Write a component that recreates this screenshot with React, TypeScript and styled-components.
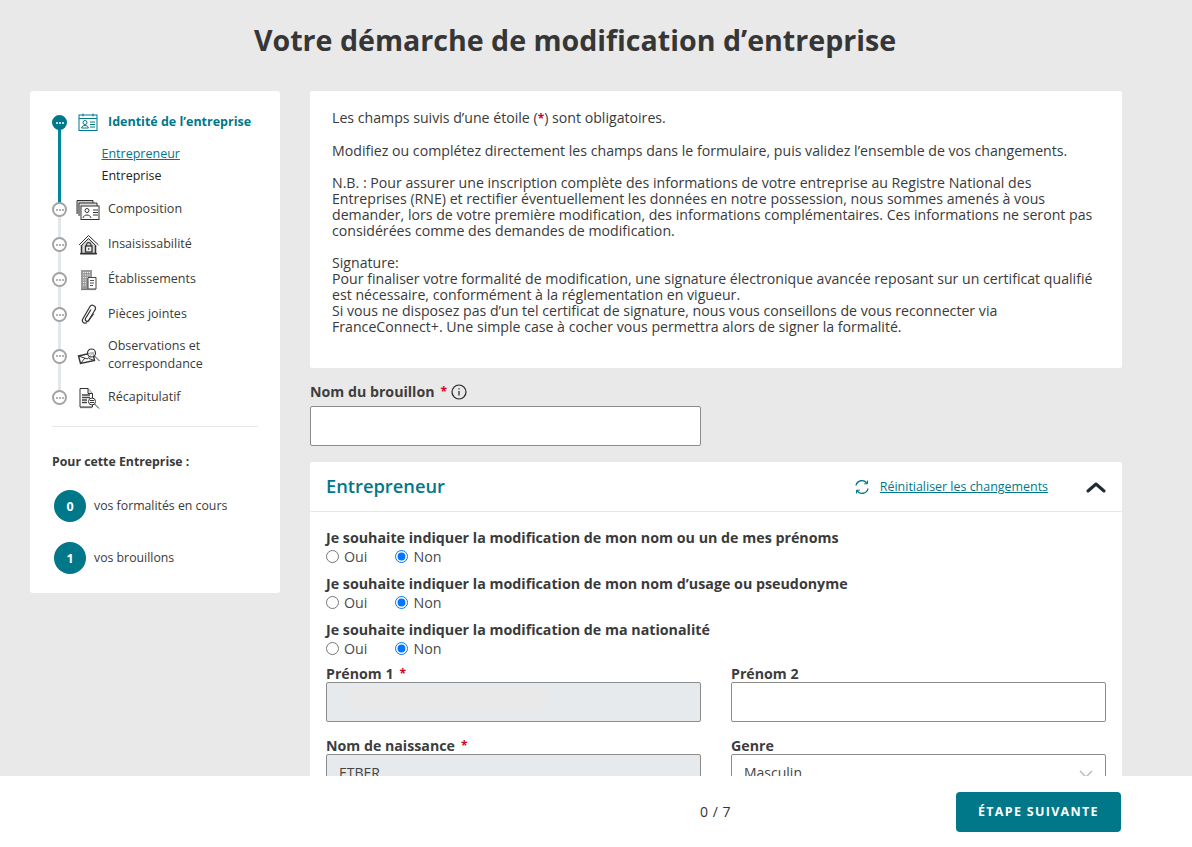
import React from "react";
import styled, { createGlobalStyle } from "styled-components";

const TEAL = "#00788a";

const Global = createGlobalStyle`
  html, body { margin: 0; padding: 0; height: 847px; overflow: hidden; background: #e9e9e9; }
  body { font-family: "Open Sans", "Liberation Sans", sans-serif; color: #333; }
  * { box-sizing: border-box; }
`;

const Page = styled.div`
  width: 1192px;
  height: 847px;
  overflow: hidden;
  position: relative;
`;
const Title = styled.h1`
  margin: 0;
  width: 1150px;
  height: 91px;
  padding-top: 20px;
  text-align: center;
  font-size: 28.6px;
  line-height: 40px;
  font-weight: 700;
  color: #363636;
`;
const Columns = styled.div`
  display: flex;
  align-items: flex-start;
  gap: 30px;
  padding-left: 30px;
`;
const Sidebar = styled.aside`
  width: 250px;
  height: 502px;
  background: #fff;
  border-radius: 3px;
  padding: 14px 22px 0;
`;
const Stepper = styled.div`
  position: relative;
  padding-bottom: 11px;
  border-bottom: 1px solid #e6e8ea;
`;
const Rail = styled.div<{ $top: number; $height: number; $active?: boolean }>`
  position: absolute;
  left: 6px;
  top: ${(p) => p.$top}px;
  height: ${(p) => p.$height}px;
  width: 3px;
  background: ${(p) => (p.$active ? "#00869b" : "#e4e7ea")};
`;
const Step = styled.div<{ $tall?: boolean }>`
  position: relative;
  display: flex;
  align-items: center;
  min-height: ${(p) => (p.$tall ? 48 : 35)}px;
`;
const Bullet = styled.span<{ $active?: boolean }>`
  flex: none;
  width: 15px;
  height: 15px;
  border-radius: 50%;
  display: flex;
  align-items: center;
  justify-content: center;
  gap: 1px;
  background: ${(p) => (p.$active ? "#00788a" : "#fff")};
  border: 2px solid ${(p) => (p.$active ? "#00788a" : "#a3a3a3")};
  i {
    width: 2px;
    height: 2px;
    border-radius: 50%;
    background: ${(p) => (p.$active ? "#fff" : "#9a9a9a")};
  }
`;
const StepIcon = styled.svg`
  flex: none;
  width: 24px;
  height: 24px;
  margin-left: 9px;
  margin-right: 8px;
`;
const StepLabel = styled.span<{ $active?: boolean }>`
  font-size: 12.5px;
  line-height: 18px;
  padding-bottom: 2px;
  font-weight: ${(p) => (p.$active ? 700 : 400)};
  color: ${(p) => (p.$active ? TEAL : "#3a3a3a")};
`;
const SubList = styled.div`
  padding: 3px 0 5px 49.5px;
`;
const SubItem = styled.div<{ $current?: boolean }>`
  height: 22px;
  font-size: 12.5px;
  line-height: 22px;
  color: ${(p) => (p.$current ? TEAL : "#222")};
  text-decoration: ${(p) => (p.$current ? "underline" : "none")};
`;
const ForTitle = styled.div`
  margin-top: 26px;
  font-size: 12.3px;
  line-height: 18px;
  font-weight: 700;
  color: #3a3a3a;
`;
const Counter = styled.div`
  display: flex;
  align-items: center;
  gap: 8px;
  margin: 19px 0 0 2px;
  font-size: 12.3px;
  color: #3a3a3a;
  & + & { margin-top: 20px; }
`;
const CounterText = styled.span`
  padding-bottom: 2px;
`;
const CounterDot = styled.span`
  width: 32px;
  height: 32px;
  border-radius: 50%;
  background: ${TEAL};
  color: #fff;
  display: flex;
  align-items: center;
  justify-content: center;
  font-size: 12.5px;
  font-weight: 700;
`;
const Main = styled.main`
  width: 812px;
`;
const Notice = styled.section`
  height: 277px;
  background: #fff;
  border-radius: 2px;
  padding: 19px 22px 0;
  font-size: 14.15px;
  line-height: 16px;
  color: #3a3a3a;
  p { margin: 0 0 16px; }
  b { color: #d0021b; font-weight: 700; font-size: 12px; }
`;
const FieldLabel = styled.label`
  display: flex;
  align-items: center;
  gap: 4px;
  height: 14px;
  font-size: 14.2px;
  line-height: 14px;
  font-weight: 700;
  color: #3d3d3d;
`;
const Star = styled.span`
  color: #d0021b;
  font-size: 12px;
  font-weight: 700;
  margin-left: 2px;
`;
const InfoIcon = styled.svg`
  margin-left: 0;
`;
const DraftField = styled.div`
  margin-top: 17px;
  width: 391px;
`;
const TextBox = styled.div<{ $disabled?: boolean }>`
  position: relative;
  margin-top: 1px;
  height: 40px;
  padding-left: 12px;
  border: 1px solid #8c8c8c;
  border-radius: 2px;
  background: ${(p) => (p.$disabled ? "#e7eaed" : "#fff")};
  font-size: 14px;
  line-height: 36px;
  color: #444;
`;
const DraftBox = styled(TextBox)`
  margin-top: 7px;
`;
const Masked = styled.span`
  display: block;
  margin: 6px 0 0 8px;
  width: 200px;
  height: 20px;
  background: #e9e9e9;
`;
const SelectChevron = styled.svg`
  position: absolute;
  right: 12px;
  top: 15px;
  width: 14px;
  height: 9px;
`;
const Card = styled.section`
  margin-top: 16px;
  background: #fff;
  border-radius: 2px;
`;
const CardHeader = styled.header`
  height: 50px;
  padding: 0 16px;
  display: flex;
  align-items: center;
  border-bottom: 1px solid #e6e6e6;
`;
const CardTitle = styled.h2`
  margin: 0 0 2px;
  font-size: 18.3px;
  font-weight: 600;
  color: ${TEAL};
  flex: 1;
`;
const ResetLink = styled.a`
  margin-left: 10px;
  font-size: 12.45px;
  color: ${TEAL};
  text-decoration: underline;
`;
const Collapse = styled.svg`
  margin-left: 38px;
  width: 20px;
  height: 12px;
`;
const CardBody = styled.div`
  padding: 17px 16px 0;
`;
const Question = styled.div`
  height: 46px;
`;
const QuestionText = styled.div`
  font-size: 14.25px;
  line-height: 18px;
  font-weight: 700;
  color: #3a3a3a;
`;
const RadioRow = styled.div`
  display: flex;
  gap: 28px;
  height: 18px;
  align-items: center;
`;
const RadioLabel = styled.label`
  display: flex;
  align-items: center;
  gap: 5px;
  font-size: 14.25px;
  color: #4a4a4a;
  input { margin: 0; width: 13px; height: 13px; }
`;
const Grid = styled.div`
  display: grid;
  grid-template-columns: 375px 375px;
  column-gap: 30px;
  row-gap: 17px;
`;
const GridField = styled.div``;
const Footer = styled.footer`
  position: absolute;
  left: 0;
  right: 0;
  bottom: 0;
  height: 71px;
  background: #fff;
  display: flex;
  align-items: center;
  padding-left: 700px;
`;
const Pager = styled.span`
  font-size: 14px;
  letter-spacing: 0.5px;
  color: #333;
`;
const NextButton = styled.button`
  margin-left: 225px;
  width: 165px;
  height: 40px;
  border: none;
  border-radius: 4px;
  background: ${TEAL};
  color: #fff;
  font-family: inherit;
  font-size: 12.5px;
  font-weight: 700;
  letter-spacing: 1.3px;
`;

const dark = { fill: "none", stroke: "#333", strokeWidth: 1 };

const IconCard = () => (
  <StepIcon viewBox="0 0 24 24" fill="none" stroke={TEAL} strokeWidth="1">
    <rect x="3" y="4" width="18" height="15.500" />
    <path d="M3 7.500h18M7 2.500v3M17 2.500v3M14 11h5M14 13.500h5M14 16h5" />
    <circle cx="9" cy="11.500" r="2" />
    <path d="M5.500 17c.5-2 2-2.500 3.500-2.500s3 .5 3.500 2.500H5.500z" />
  </StepIcon>
);
const IconStack = () => (
  <StepIcon viewBox="0 0 24 24" {...dark}>
    <path d="M1 16V2.500h16V5" fill="#ccc" />
    <path d="M3 18V5h18v3" fill="#ddd" />
    <rect x="5" y="8" width="18" height="13.500" fill="#fff" />
    <circle cx="11" cy="12.500" r="2" />
    <path d="M7 20c.5-2 2-3 4-3s3.500 1 4 3M17 12h5M17 14.500h5M17 17h5" />
  </StepIcon>
);
const IconHouse = () => (
  <StepIcon viewBox="0 0 24 24" {...dark}>
    <path d="M5.500 11v9.500h14V11L12.500 5z" fill="#d8d8d8" stroke="none" />
    <path d="M3 12 12.500 2.500 22.500 12M5.500 12.500 12.500 5.500 19.500 12.500" />
    <path d="M5.500 12v8.500h14V12" strokeWidth="1.500" />
    <path d="M4 20.700h17" strokeWidth="1.300" />
    <rect x="9.500" y="13" width="6.500" height="6" fill="#eee" strokeWidth="1.300" />
    <path d="M10.500 13v-1.500a2.300 2.300 0 0 1 4.500 0V13" strokeWidth="1.200" />
    <path d="M12.800 15v2" />
  </StepIcon>
);
const IconBuilding = () => (
  <StepIcon viewBox="0 0 24 24">
    <path d="M5 2h11v19H5z" fill="#9b9b9b" />
    <path d="M7 4.500h7M7 7h7M7 9.500h7M7 12h3M7 14.500h3M7 17h3" stroke="#e8e8e8" strokeWidth="1.200" strokeDasharray="1.200 .8" />
    <path d="M12 9.500h8V21h-8z" fill="#fff" stroke="#444" />
    <path d="M14 12.500h4M14 15h4M14 17.500h3" stroke="#555" />
    <path d="M5 21.500h15" stroke="#777" strokeWidth="1.200" />
  </StepIcon>
);
const IconClip = () => (
  <StepIcon viewBox="0 0 24 24" {...dark} strokeWidth={1.200}>
    <path d="M11 19.500C9 21 5.500 19.500 6.500 16.500L14 3.500C15.500 1 20 2.500 19.500 6L13 17C11.500 19.500 8.500 18 9.500 15.500L15 6.500" />
    <path d="M11.500 19 17.500 11" />
  </StepIcon>
);
const IconMail = () => (
  <StepIcon viewBox="0 0 24 24" {...dark}>
    <path d="M2.500 12 17 8.500 18.500 16.500 4.500 19.500z" fill="#fff" strokeWidth="1.400" />
    <path d="M2.500 12 11.500 15 17 8.500M4.500 19.500 9 14M13 14.500l5.500 2" />
    <circle cx="15.500" cy="9" r="4" fill="#fff" fillOpacity=".6" strokeWidth="1.200" />
    <path d="m18.500 12 5 5" />
  </StepIcon>
);
const IconDoc = () => (
  <StepIcon viewBox="0 0 24 24" {...dark}>
    <path d="M4 21.500h12" stroke="#aaa" strokeWidth="1.500" />
    <path d="M4 2.500h8l4.500 5V21H4z" fill="#fff" />
    <path d="M12 2.500v5h4.500" fill="#ddd" />
    <path d="M6 9h8M6 11.500h8M6 14h5M6 16.500h5" stroke="#444" strokeWidth="1.300" />
    <circle cx="16" cy="15.500" r="3.500" fill="#fff" />
    <path d="M14 14.500h4M14 16.500h4" stroke="#333" />
    <path d="m18.500 18 4.500 4.500" />
  </StepIcon>
);
const Dots = () => (<><i /><i /><i /></>);

const YesNo = ({ name }: { name: string }) => (
  <RadioRow>
    <RadioLabel><input type="radio" name={name} readOnly />Oui</RadioLabel>
    <RadioLabel><input type="radio" name={name} defaultChecked />Non</RadioLabel>
  </RadioRow>
);

const steps = [
  { label: "Composition", Icon: IconStack },
  { label: "Insaisissabilité", Icon: IconHouse },
  { label: "Établissements", Icon: IconBuilding },
  { label: "Pièces jointes", Icon: IconClip },
  { label: "Observations et correspondance", Icon: IconMail, tall: true },
  { label: "Récapitulatif", Icon: IconDoc },
];

const questions = [
  "Je souhaite indiquer la modification de mon nom ou un de mes prénoms",
  "Je souhaite indiquer la modification de mon nom d’usage ou pseudonyme",
  "Je souhaite indiquer la modification de ma nationalité",
];

export default function App() {
  return (
    <Page>
      <Global />
      <Title>Votre démarche de modification d’entreprise</Title>
      <Columns>
        <Sidebar>
          <Stepper>
            <Rail $active $top={17} $height={87} />
            <Rail $top={104} $height={188} />
            <Step>
              <Bullet $active><Dots /></Bullet>
              <IconCard />
              <StepLabel $active>Identité de l’entreprise</StepLabel>
            </Step>
            <SubList>
              <SubItem $current>Entrepreneur</SubItem>
              <SubItem>Entreprise</SubItem>
            </SubList>
            {steps.map(({ label, Icon, tall }) => (
              <Step key={label} $tall={tall}>
                <Bullet><Dots /></Bullet>
                <Icon />
                <StepLabel>{label}</StepLabel>
              </Step>
            ))}
          </Stepper>
          <ForTitle>Pour cette Entreprise :</ForTitle>
          <Counter><CounterDot>0</CounterDot><CounterText>vos formalités en cours</CounterText></Counter>
          <Counter><CounterDot>1</CounterDot><CounterText>vos brouillons</CounterText></Counter>
        </Sidebar>
        <Main>
          <Notice>
            <p>Les champs suivis d’une étoile (<b>*</b>) sont obligatoires.</p>
            <p>Modifiez ou complétez directement les champs dans le formulaire, puis validez l’ensemble de vos changements.</p>
            <p>N.B. : Pour assurer une inscription complète des informations de votre entreprise au Registre National des Entreprises (RNE) et rectifier éventuellement les données en notre possession, nous sommes amenés à vous demander, lors de votre première modification, des informations complémentaires. Ces informations ne seront pas considérées comme des demandes de modification.</p>
            <p>Signature:<br />Pour finaliser votre formalité de modification, une signature électronique avancée reposant sur un certificat qualifié est nécessaire, conformément à la réglementation en vigueur.<br />Si vous ne disposez pas d’un tel certificat de signature, nous vous conseillons de vous reconnecter via FranceConnect+. Une simple case à cocher vous permettra alors de signer la formalité.</p>
          </Notice>
          <DraftField>
            <FieldLabel>
              Nom du brouillon <Star>*</Star>
              <InfoIcon width="16" height="16" viewBox="0 0 16 16" fill="none" stroke="#222" strokeWidth="1.200">
                <circle cx="8" cy="8" r="7" />
                <path d="M8 7v4.500M8 4.200v1.300" />
              </InfoIcon>
            </FieldLabel>
            <DraftBox />
          </DraftField>
          <Card>
            <CardHeader>
              <CardTitle>Entrepreneur</CardTitle>
              <svg width="16" height="16" viewBox="0 0 16 16" fill="none" stroke={TEAL} strokeWidth="1.300">
                <path d="M2 6.500A6 6 0 0 1 13 4.500M14 9.500A6 6 0 0 1 3 11.500" />
                <path d="M13.500 1.500v3.300h-3.300M2.500 14.500v-3.300h3.300" strokeWidth="1" />
              </svg>
              <ResetLink>Réinitialiser les changements</ResetLink>
              <Collapse viewBox="0 0 20 12" fill="none" stroke="#1f2a33" strokeWidth="3" strokeLinecap="round" strokeLinejoin="round">
                <path d="M2 10l8-7 8 7" />
              </Collapse>
            </CardHeader>
            <CardBody>
              {questions.map((q, i) => (
                <Question key={q}>
                  <QuestionText>{q}</QuestionText>
                  <YesNo name={`q${i}`} />
                </Question>
              ))}
              <Grid>
                <GridField>
                  <FieldLabel>Prénom 1 <Star>*</Star></FieldLabel>
                  <TextBox $disabled><Masked /></TextBox>
                </GridField>
                <GridField>
                  <FieldLabel>Prénom 2</FieldLabel>
                  <TextBox />
                </GridField>
                <GridField>
                  <FieldLabel>Nom de naissance <Star>*</Star></FieldLabel>
                  <TextBox $disabled>ETBER</TextBox>
                </GridField>
                <GridField>
                  <FieldLabel>Genre</FieldLabel>
                  <TextBox>
                    Masculin
                    <SelectChevron viewBox="0 0 14 9" fill="none" stroke="#bbb" strokeWidth="1.500"><path d="M1 1l6 6 6-6" /></SelectChevron>
                  </TextBox>
                </GridField>
              </Grid>
            </CardBody>
          </Card>
        </Main>
      </Columns>
      <Footer>
        <Pager>0 / 7</Pager>
        <NextButton>ÉTAPE SUIVANTE</NextButton>
      </Footer>
    </Page>
  );
}
